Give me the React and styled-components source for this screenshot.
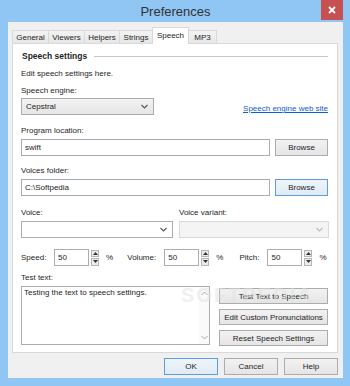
import React from 'react';
import styled, { createGlobalStyle } from 'styled-components';

const Global = createGlobalStyle`
  html, body { margin: 0; padding: 0; width: 350px; height: 386px; overflow: hidden; }
  body { font-family: "Liberation Sans", Arial, sans-serif; font-size: 8px; color: #1e1e1e; }
  * { box-sizing: border-box; }
`;

const Frame = styled.div`
  width: 350px;
  height: 386px;
  background: #8fc6f3;
  padding: 0 7px 8px 8px;
  display: flex;
  flex-direction: column;
`;

const TitleBar = styled.div`
  height: 22px;
  display: grid;
  grid-template-columns: 1fr auto 1fr;
  align-items: start;
`;

const Title = styled.div`
  grid-column: 2;
  font-size: 13px;
  color: #333;
  line-height: 23px;
`;

const Close = styled.div`
  grid-column: 3;
  justify-self: end;
  width: 22px;
  height: 20px;
  background: #c75050;
  display: flex;
  align-items: center;
  justify-content: center;
`;

const Client = styled.div`
  flex: 1;
  background: #f0f0f0;
  padding: 5px 5px 3px 4px;
  display: flex;
  flex-direction: column;
`;

const Tabs = styled.div`
  display: flex;
  align-items: flex-end;
  height: 17px;
  margin-bottom: -1px;
  position: relative;
  z-index: 1;
`;

const Tab = styled.div`
  width: ${p => p.$w}px;
  height: ${p => (p.$active ? 17 : 14)}px;
  margin-right: -1px;
  border: 1px solid #d9d9d9;
  border-bottom: ${p => (p.$active ? 'none' : '1px solid #d9d9d9')};
  background: ${p => (p.$active ? '#fff' : 'linear-gradient(#f3f3f3, #e7e7e7)')};
  display: flex;
  justify-content: center;
  align-items: ${p => (p.$active ? 'flex-start' : 'center')};
  padding-top: ${p => (p.$active ? 3 : 0)}px;
  color: #1e1e1e;
  white-space: nowrap;
`;

const Panel = styled.div`
  height: 310px;
  background: #fff;
  border: 1px solid #d9d9d9;
  padding: 6px 9px 0 8px;
  display: flex;
  flex-direction: column;
`;

const GroupHeader = styled.div`
  display: flex;
  align-items: center;
  height: 12px;
  font-size: 8.5px;
  font-weight: bold;
  gap: 7px;
  padding-left: 1px;
  &::after {
    content: '';
    flex: 1;
    height: 1px;
    background: #c8c8c8;
  }
`;

const Text = styled.div`
  height: 12px;
  line-height: 12px;
  margin-top: ${p => p.$mt || 0}px;
  white-space: nowrap;
`;

const Row = styled.div`
  display: flex;
  align-items: ${p => p.$align || 'center'};
  justify-content: ${p => p.$justify || 'flex-start'};
  gap: ${p => p.$gap || 0}px;
  margin-top: ${p => p.$mt || 0}px;
`;

const SelectBox = styled.div`
  width: ${p => (p.$w ? `${p.$w}px` : 'auto')};
  flex: ${p => (p.$w ? 'none' : 1)};
  height: 17px;
  border: 1px solid ${p => (p.$disabled ? '#d9d9d9' : '#acacac')};
  background: ${p => (p.$disabled ? '#f4f4f4' : p.$flat ? '#fff' : 'linear-gradient(#f2f2f2, #e6e6e6)')};
  display: flex;
  align-items: center;
  justify-content: space-between;
  padding: 0 5px 0 4px;
`;

const Link = styled.a`
  color: #0b5ed8;
  text-decoration: underline;
  line-height: 12px;
  margin-bottom: 0;
  cursor: pointer;
`;

const Input = styled.div`
  flex: ${p => (p.$w ? 'none' : 1)};
  width: ${p => (p.$w ? `${p.$w}px` : 'auto')};
  height: 17px;
  border: 1px solid #abadb3;
  background: #fff;
  display: flex;
  align-items: center;
  padding: 0 3px;
`;

const Button = styled.div`
  width: ${p => p.$w}px;
  height: ${p => p.$h || 17}px;
  border: 1px solid ${p => (p.$focus ? '#5a9de0' : '#acacac')};
  background: ${p => (p.$focus ? 'linear-gradient(#eef4fa, #e1ebf5)' : 'linear-gradient(#f2f2f2, #e5e5e5)')};
  display: flex;
  align-items: center;
  justify-content: center;
  white-space: nowrap;
  color: #1e1e1e;
  position: relative;
  z-index: 1;
`;

const TwoCol = styled.div`
  display: grid;
  grid-template-columns: 152px 150px;
  column-gap: 6px;
  margin-top: ${p => p.$mt || 0}px;
  row-gap: 2px;
`;

const SpinRow = styled.div`
  display: flex;
  align-items: center;
  margin-top: 11px;
  height: 17px;
`;

const SpinGroup = styled.div`
  display: flex;
  align-items: center;
  width: ${p => p.$w}px;
`;

const SpinLabel = styled.span`
  width: ${p => p.$w}px;
`;

const Spinner = styled.div`
  width: 8px;
  height: 16px;
  margin: 0 7px 0 2px;
  display: flex;
  flex-direction: column;
  gap: 1px;
`;

const SpinBtn = styled.div`
  flex: 1;
  border: 1px solid #b5b5b5;
  background: #ececec;
  display: flex;
  align-items: center;
  justify-content: center;
`;

const TestArea = styled.div`
  display: flex;
  align-items: flex-start;
  gap: 9px;
  margin-top: 2px;
  position: relative;
`;

const TextBox = styled.div`
  width: 190px;
  height: 59px;
  border: 1px solid #abadb3;
  background: #fff;
  display: flex;
`;

const TextContent = styled.div`
  flex: 1;
  padding: 0 2px;
  line-height: 12px;
`;

const ScrollBar = styled.div`
  width: 10px;
  display: flex;
  flex-direction: column;
  justify-content: space-between;
  align-items: center;
  padding: 4px 0;
  background: #fafafa;
`;

const ButtonColumn = styled.div`
  display: flex;
  flex-direction: column;
  gap: 5px;
  margin-top: 2px;
`;

const Watermark = styled.div`
  position: absolute;
  left: 160px;
  top: -2px;
  font-size: 20px;
  font-weight: bold;
  letter-spacing: 2px;
  color: rgba(225, 225, 225, 0.5);
  pointer-events: none;
  z-index: 2;
`;

const Footer = styled.div`
  display: flex;
  justify-content: flex-end;
  gap: 6px;
  margin-top: 5px;
`;

const Chevron = ({ color = '#555' }) => (
  <svg width="7" height="5" viewBox="0 0 7 5">
    <path d="M0.5 1 L3.5 4 L6.5 1" fill="none" stroke={color} strokeWidth="1.1" />
  </svg>
);

const Tri = ({ up }) => (
  <svg width="5" height="3" viewBox="0 0 5 3">
    <path d={up ? 'M0 3 L2.5 0 L5 3 Z' : 'M0 0 L2.5 3 L5 0 Z'} fill="#333" />
  </svg>
);

const ScrollArrow = ({ up }) => (
  <svg width="7" height="5" viewBox="0 0 7 5">
    <path d={up ? 'M0.5 4 L3.5 1 L6.5 4' : 'M0.5 1 L3.5 4 L6.5 1'} fill="none" stroke="#a8a8a8" strokeWidth="1" />
  </svg>
);

const Spin = ({ label, labelW, w }) => (
  <SpinGroup $w={w}>
    <SpinLabel $w={labelW}>{label}</SpinLabel>
    <Input $w={35}>50</Input>
    <Spinner>
      <SpinBtn><Tri up /></SpinBtn>
      <SpinBtn><Tri /></SpinBtn>
    </Spinner>
    <span>%</span>
  </SpinGroup>
);

const tabs = [
  ['General', 37],
  ['Viewers', 37],
  ['Helpers', 36],
  ['Strings', 34],
  ['Speech', 37],
  ['MP3', 29],
];

export default function App() {
  return (
    <>
      <Global />
      <Frame>
        <TitleBar>
          <Title>Preferences</Title>
          <Close>
            <svg width="8" height="8" viewBox="0 0 8 8">
              <path d="M1 1 L7 7 M7 1 L1 7" stroke="#fff" strokeWidth="1.8" />
            </svg>
          </Close>
        </TitleBar>
        <Client>
          <Tabs>
            {tabs.map(([t, w]) => (
              <Tab key={t} $w={w} $active={t === 'Speech'}>{t}</Tab>
            ))}
          </Tabs>
          <Panel>
            <GroupHeader>Speech settings</GroupHeader>
            <Text $mt={6}>Edit speech settings here.</Text>
            <Text $mt={5}>Speech engine:</Text>
            <Row $mt={1} $justify="space-between" $align="flex-end">
              <SelectBox $w={133}>
                <span>Cepstral</span>
                <Chevron />
              </SelectBox>
              <Link>Speech engine web site</Link>
            </Row>
            <Text $mt={10}>Program location:</Text>
            <Row $mt={2} $gap={5}>
              <Input>swift</Input>
              <Button $w={53}>Browse</Button>
            </Row>
            <Text $mt={9}>Voices folder:</Text>
            <Row $mt={2} $gap={5}>
              <Input>C:\Softpedia</Input>
              <Button $w={53} $focus>Browse</Button>
            </Row>
            <TwoCol $mt={11}>
              <Text>Voice:</Text>
              <Text>Voice variant:</Text>
              <SelectBox $flat>
                <span />
                <Chevron />
              </SelectBox>
              <SelectBox $disabled>
                <span />
                <Chevron color="#bbb" />
              </SelectBox>
            </TwoCol>
            <SpinRow>
              <Spin label="Speed:" labelW={33} w={108} />
              <Spin label="Volume:" labelW={37} w={114} />
              <Spin label="Pitch:" labelW={28} w={90} />
            </SpinRow>
            <Text $mt={6}>Test text:</Text>
            <TestArea>
              <TextBox>
                <TextContent>Testing the text to speech settings.</TextContent>
                <ScrollBar>
                  <ScrollArrow up />
                  <ScrollArrow />
                </ScrollBar>
              </TextBox>
              <ButtonColumn>
                <Button $w={109} $h={16}>Test Text to Speech</Button>
                <Button $w={109} $h={16}>Edit Custom Pronunciations</Button>
                <Button $w={109} $h={16}>Reset Speech Settings</Button>
              </ButtonColumn>
              <Watermark aria-hidden="true">SOFTPEDIA</Watermark>
            </TestArea>
          </Panel>
          <Footer>
            <Button $w={54} $focus>OK</Button>
            <Button $w={54}>Cancel</Button>
            <Button $w={54}>Help</Button>
          </Footer>
        </Client>
      </Frame>
    </>
  );
}
